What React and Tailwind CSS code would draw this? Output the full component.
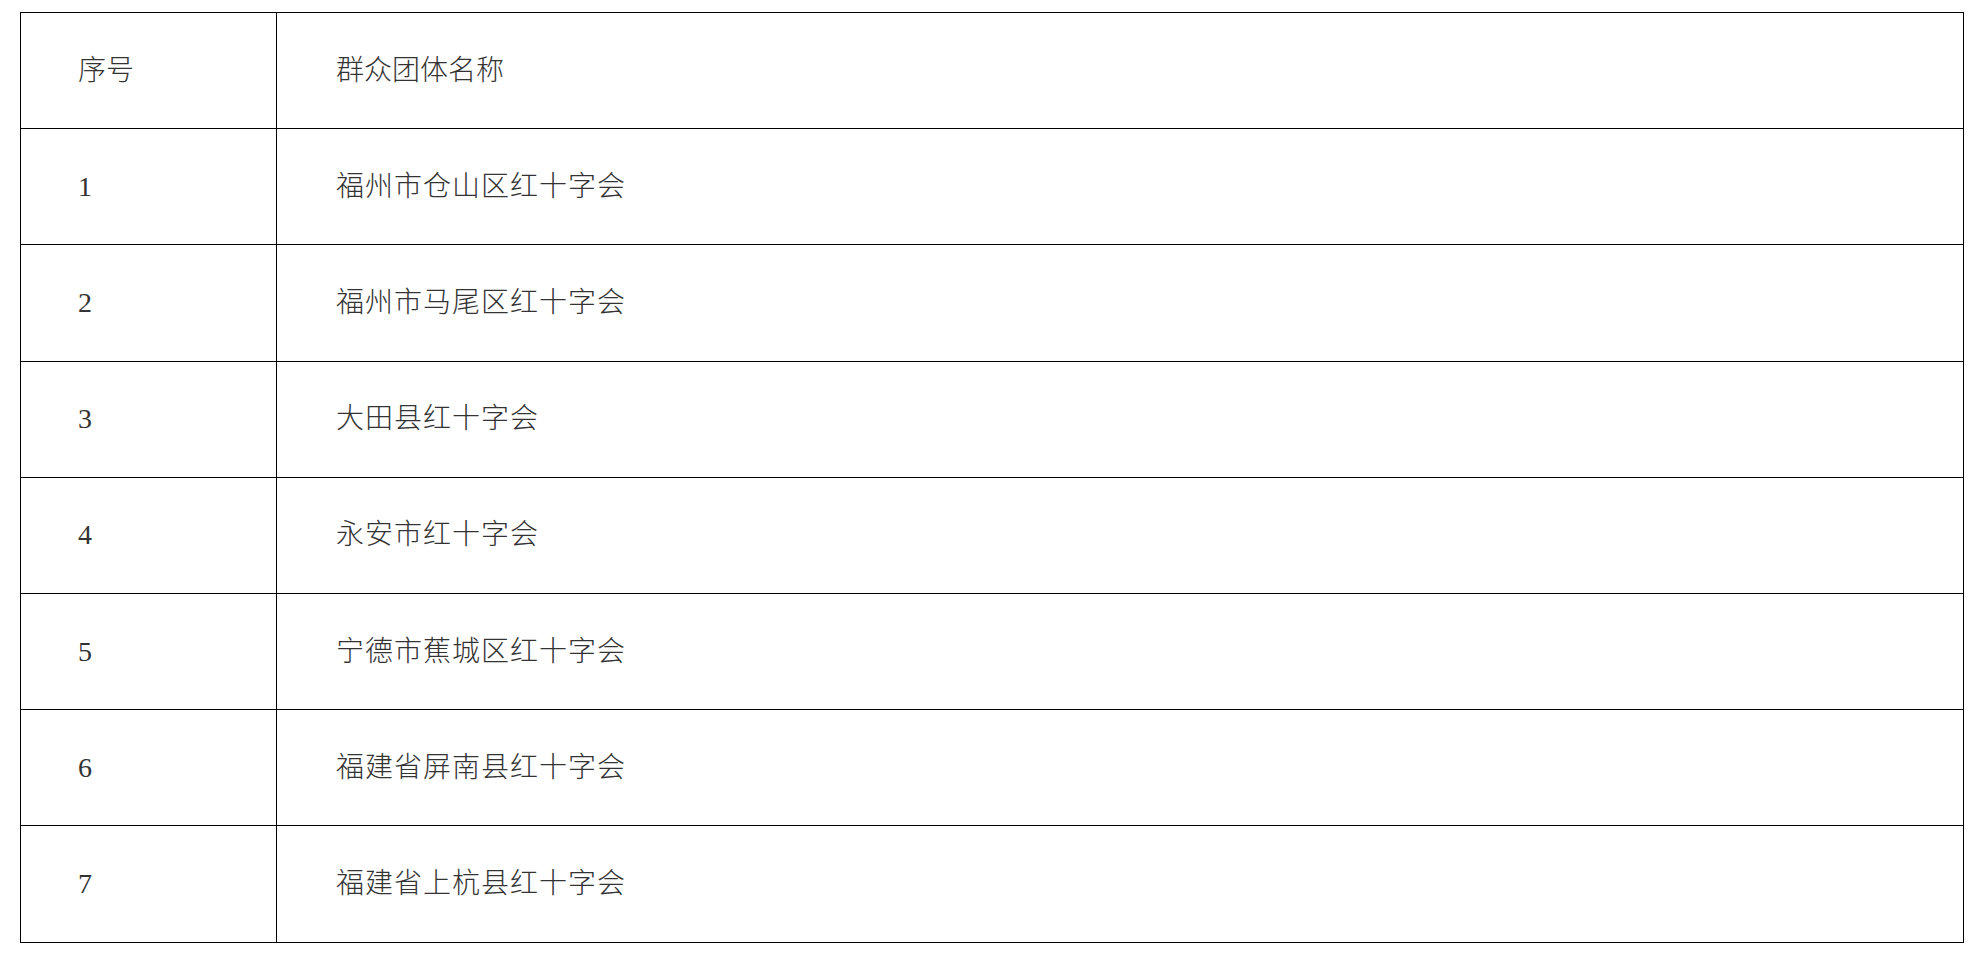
import React from "react";

const rows = [
  { no: "1", name: "福州市仓山区红十字会" },
  { no: "2", name: "福州市马尾区红十字会" },
  { no: "3", name: "大田县红十字会" },
  { no: "4", name: "永安市红十字会" },
  { no: "5", name: "宁德市蕉城区红十字会" },
  { no: "6", name: "福建省屏南县红十字会" },
  { no: "7", name: "福建省上杭县红十字会" },
];

const App = () => {
  return (
    <div className="bg-white min-h-screen pt-[12px] pl-[20px] font-['Liberation_Serif','Noto_Sans_CJK_SC',serif] text-[#333333]">
      <table className="w-[1944px] border-collapse text-[28px] font-light">
        <tbody>
          <tr className="h-[116.2px]">
            <td className="w-[256px] border border-black pl-[57px] align-middle">序号</td>
            <td className="border border-black pl-[59px] align-middle">群众团体名称</td>
          </tr>
          {rows.map((row) => (
            <tr key={row.no} className="h-[116.2px]">
              <td className="w-[256px] border border-black pl-[57px] align-middle">{row.no}</td>
              <td className="border border-black pl-[59px] align-middle tracking-[1px]">{row.name}</td>
            </tr>
          ))}
        </tbody>
      </table>
    </div>
  );
};

export default App;
